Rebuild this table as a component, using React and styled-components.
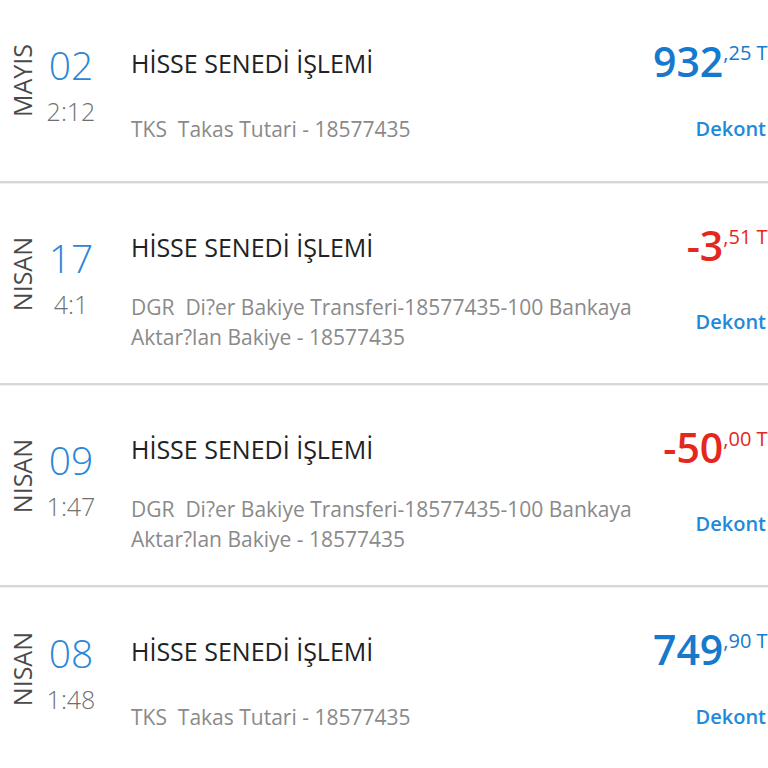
import React from "react";
import styled, { createGlobalStyle } from "styled-components";

const GlobalStyle = createGlobalStyle`
  html, body {
    margin: 0;
    padding: 0;
    background: #ffffff;
    overflow: hidden;
  }

  body {
    font-family: "Open Sans", "Noto Sans", sans-serif;
  }
`;

const transactions = [
  {
    month: "MAYIS",
    day: "02",
    time: "2:12",
    title: "HİSSE SENEDİ İŞLEMİ",
    desc: "TKS  Takas Tutari - 18577435",
    whole: "932",
    frac: ",25 TL",
    negative: false,
  },
  {
    month: "NISAN",
    day: "17",
    time: "4:1",
    title: "HİSSE SENEDİ İŞLEMİ",
    desc: "DGR  Di?er Bakiye Transferi-18577435-100 Bankaya Aktar?lan Bakiye - 18577435",
    whole: "-3",
    frac: ",51 TL",
    negative: true,
  },
  {
    month: "NISAN",
    day: "09",
    time: "1:47",
    title: "HİSSE SENEDİ İŞLEMİ",
    desc: "DGR  Di?er Bakiye Transferi-18577435-100 Bankaya Aktar?lan Bakiye - 18577435",
    whole: "-50",
    frac: ",00 TL",
    negative: true,
  },
  {
    month: "NISAN",
    day: "08",
    time: "1:48",
    title: "HİSSE SENEDİ İŞLEMİ",
    desc: "TKS  Takas Tutari - 18577435",
    whole: "749",
    frac: ",90 TL",
    negative: false,
  },
];

// one row of the account movement list
const TransactionRow = ({ item }) => {
  return (
    <>
      <Row>
        {/* rotated month with day and time */}
        <DateBlock>
          <Month>{item.month}</Month>
          <DayTime>
            <Day>{item.day}</Day>
            <Time>{item.time}</Time>
          </DayTime>
        </DateBlock>

        <Body>
          <TopLine>
            <Title>{item.title}</Title>
            {/* the TL suffix runs past the screen edge, as in the app */}
            <Amount $negative={item.negative}>
              <Whole>{item.whole}</Whole>
              <Frac>{item.frac}</Frac>
            </Amount>
          </TopLine>
          <BottomLine>
            <Desc>{item.desc}</Desc>
            <Dekont>Dekont</Dekont>
          </BottomLine>
        </Body>
      </Row>
      <Divider />
    </>
  );
};

const App = () => {
  return (
    <Wrapper>
      <GlobalStyle />
      {transactions.map((item, i) => (
        <TransactionRow key={i} item={item} />
      ))}
    </Wrapper>
  );
};

const Wrapper = styled.div`
  width: 768px;
  display: flex;
  flex-direction: column;
`;

const Row = styled.div`
  display: flex;
  align-items: center;
  padding: 41px 2px 31.5px 10px;
`;

const Divider = styled.div`
  height: 2px;
  background: #d7d7d7;
  border-bottom: 1px solid #efefef;
`;

const DateBlock = styled.div`
  display: flex;
  align-items: flex-start;
  width: 121px;
  flex-shrink: 0;
  margin-bottom: 22px;
`;

const Month = styled.div`
  writing-mode: vertical-rl;
  transform: rotate(180deg);
  font-size: 25px;
  line-height: 24px;
  color: #4a4a4a;
  margin-top: -1px;
`;

const DayTime = styled.div`
  display: flex;
  flex-direction: column;
  align-items: center;
  width: 52px;
  margin-left: 11px;
`;

const Day = styled.div`
  font-size: 39px;
  font-weight: 300;
  line-height: 1;
  color: #2a86d8;
`;

const Time = styled.div`
  font-size: 25px;
  font-weight: 300;
  line-height: 1;
  color: #6f6f6f;
  margin-top: 15px;
`;

const Body = styled.div`
  flex: 1;
  min-width: 0;
  display: flex;
  flex-direction: column;
`;

const TopLine = styled.div`
  display: flex;
  justify-content: space-between;
  align-items: flex-start;
`;

const Title = styled.div`
  font-size: 25px;
  line-height: 44px;
  color: #222222;
`;

const Amount = styled.div`
  display: flex;
  align-items: flex-start;
  margin-right: -12px;
  color: ${(p) => (p.$negative ? "#e5281d" : "#1779cc")};
  white-space: nowrap;
`;

const Whole = styled.span`
  font-size: 41px;
  font-weight: 600;
  line-height: 1;
`;

const Frac = styled.span`
  font-size: 20px;
  font-weight: 400;
  line-height: 1;
  margin-top: 2px;
`;

const BottomLine = styled.div`
  display: flex;
  justify-content: space-between;
  align-items: center;
  min-height: 42px;
  margin-top: 22.5px;
`;

const Desc = styled.div`
  flex: 1;
  margin-right: 30px;
  font-size: 21px;
  line-height: 30px;
  color: #8a8a8a;
  white-space: pre-wrap;
`;

const Dekont = styled.div`
  font-size: 20px;
  font-weight: 600;
  color: #1f8ad9;
`;

export default App;
